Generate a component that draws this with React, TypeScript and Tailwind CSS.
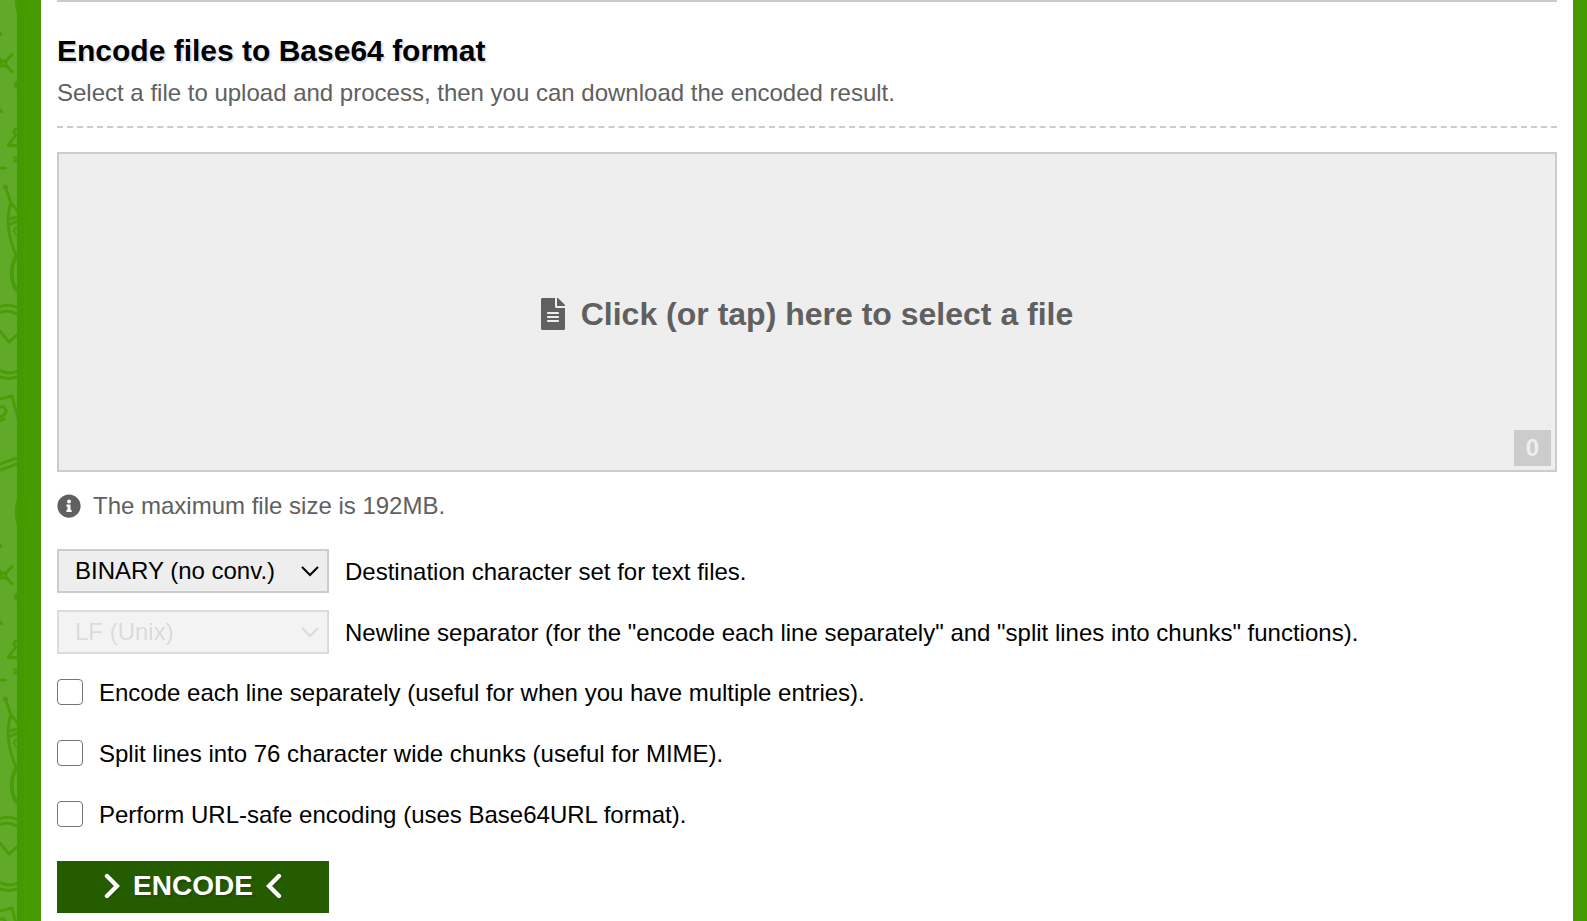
import React from "react";
import { FaFileAlt, FaInfoCircle } from "react-icons/fa";

function PatternStrip() {
  return (
    <div className="relative w-[17px] shrink-0 overflow-hidden bg-[#61a928]" aria-hidden="true">
      <svg className="absolute inset-0 h-full w-full">
        <defs>
          <pattern id="doodles" width="17" height="512" patternUnits="userSpaceOnUse">
            <g fill="none" stroke="#4a9d08" strokeWidth="3" strokeLinecap="round" strokeLinejoin="round">
              <circle cx="53" cy="0" r="38.5" fill="#4a9d08" stroke="none" />
              <circle cx="53" cy="512" r="38.5" fill="#4a9d08" stroke="none" />
              <circle cx="0" cy="34" r="2.2" fill="#4a9d08" stroke="none" />
              <path d="M12 54.500L4 63L12 72M-6 54L4 63L-6 72" />
              <circle cx="3.500" cy="63.500" r="4" fill="#4a9d08" stroke="none" />
              <circle cx="3.500" cy="63.500" r="1" fill="#61a928" stroke="none" />
              <circle cx="18" cy="85" r="4.2" fill="#4a9d08" stroke="none" />
              <path d="M-2 107L1.500 112" />
              <circle cx="17" cy="132" r="3" />
              <path d="M16 135L8 145.500H19" />
              <path d="M14 157L18 162M14 162L18 157" strokeWidth="2.2" />
              <path d="M-2 168H5.500" />
              <circle cx="5.500" cy="187" r="2.600" fill="#4a9d08" stroke="none" />
              <path d="M5.500 187L11 203L18 211M11 203C6 216 7 238 18 259M9 219L17 217M9 225L17 221" />
              <circle cx="18" cy="231" r="4" strokeWidth="2" />
              <path d="M15 258C10 269 11 283 17 291" strokeWidth="4" />
              <path d="M0 306.500Q8 304 17 307M0 312.500Q9 309 17 314M0 331L9 342L17 335" />
              <path d="M0 370.500Q9 375 17 371M0 377Q9 380 17 377" />
              <path d="M0 399L12 396L18 418M0 407C5 406 8 411 4 415C3 416 1 417 0 416M0 421L4 419" />
              <path d="M0 464L17 458M0 470L17 464" />
            </g>
          </pattern>
        </defs>
        <rect width="100%" height="100%" fill="url(#doodles)" />
      </svg>
    </div>
  );
}

function Chevron({ path }: { path: string }) {
  return (
    <svg
      viewBox="0 0 16 26"
      className="h-[26px] w-4 drop-shadow-[1px_1px_1px_#1f4d00]"
      fill="none"
      stroke="currentColor"
      strokeWidth="4.4"
      strokeLinecap="round"
      strokeLinejoin="miter"
      aria-hidden="true"
    >
      <path d={path} />
    </svg>
  );
}

type SelectRowProps = { id: string; options: string[]; label: string; disabled?: boolean };

function SelectRow({ id, options, label, disabled = false }: SelectRowProps) {
  return (
    <div className="flex items-center gap-4">
      <div className={disabled ? "relative w-[272px] shrink-0 opacity-70" : "relative w-[272px] shrink-0"}>
        <select
          id={id}
          disabled={disabled}
          className="block h-11 w-full appearance-none border-2 border-[#ccc] bg-[#eee] pr-10 pl-4 text-black disabled:text-[#ccc]"
        >
          {options.map((option) => (
            <option key={option}>{option}</option>
          ))}
        </select>
        <svg
          viewBox="0 0 18 12"
          className={
            disabled
              ? "pointer-events-none absolute top-4 right-[10px] h-3 w-[18px] text-[#ccc]"
              : "pointer-events-none absolute top-4 right-[10px] h-3 w-[18px] text-black"
          }
          fill="none"
          stroke="currentColor"
          strokeWidth="2"
          aria-hidden="true"
        >
          <path d="M1 2L9 10L17 2" />
        </svg>
      </div>
      <label htmlFor={id} className="pt-0.5">
        {label}
      </label>
    </div>
  );
}

function CheckRow({ id, label }: { id: string; label: string }) {
  return (
    <div className="flex h-[42px] items-center gap-4">
      <input
        id={id}
        type="checkbox"
        className="size-[26px] shrink-0 appearance-none rounded-[4px] border border-[#767676] bg-white checked:bg-[#459a00]"
      />
      <label htmlFor={id} className="pt-0.5">
        {label}
      </label>
    </div>
  );
}

export default function App() {
  return (
    <div className="flex min-h-screen bg-[#459a00] font-['Liberation_Sans',Arial,sans-serif] text-[24px] leading-8 text-black">
      <PatternStrip />
      <main className="mr-[14px] ml-6 min-w-0 flex-1 bg-white px-4">
        <header className="border-t-2 border-[#ccc] pt-[31px]">
          <h1 className="text-[30px] leading-9 font-bold [text-shadow:2px_2px_1px_#dde2ea]">
            Encode files to Base64 format
          </h1>
          <p className="mt-2 text-[#606060]">Select a file to upload and process, then you can download the encoded result.</p>
        </header>
        <hr className="mt-[17px] border-t-2 border-dashed border-[#ccc]" />
        <form className="flex flex-col" onSubmit={(event) => event.preventDefault()}>
          <label className="relative mt-6 flex h-80 cursor-pointer items-center justify-center gap-4 border-2 border-[#ccc] bg-[#eee] pt-1 text-[32px] font-bold text-[#606060]">
            <input type="file" className="sr-only" />
            <FaFileAlt className="h-8 w-6" aria-hidden="true" />
            <span>Click (or tap) here to select a file</span>
            <span className="absolute right-1 bottom-1 flex h-9 w-[37px] items-center justify-center bg-[#ccc] text-[24px] text-[#eee]">
              0
            </span>
          </label>
          <p className="mt-[18px] flex items-center gap-3 text-[#606060]">
            <FaInfoCircle className="size-6" aria-hidden="true" />
            The maximum file size is 192MB.
          </p>
          <div className="mt-[27px] flex flex-col gap-[17px]">
            <SelectRow
              id="charset"
              options={["BINARY (no conv.)", "UTF-8", "ASCII"]}
              label="Destination character set for text files."
            />
            <SelectRow
              id="newline"
              options={["LF (Unix)", "CRLF (Windows)"]}
              label={'Newline separator (for the "encode each line separately" and "split lines into chunks" functions).'}
              disabled
            />
          </div>
          <div className="mt-[17px] flex flex-col gap-[19px]">
            <CheckRow id="each-line" label="Encode each line separately (useful for when you have multiple entries)." />
            <CheckRow id="chunks" label="Split lines into 76 character wide chunks (useful for MIME)." />
            <CheckRow id="url-safe" label="Perform URL-safe encoding (uses Base64URL format)." />
          </div>
          <button
            type="submit"
            className="mt-[26px] flex h-[52px] w-[272px] items-center justify-center gap-[13px] bg-[#265c00] pb-0.5 text-[28px] font-bold text-white [text-shadow:2px_2px_2px_#1f4d00]"
          >
            <Chevron path="M3 3L13 13L3 23" />
            ENCODE
            <Chevron path="M13 3L3 13L13 23" />
          </button>
        </form>
      </main>
    </div>
  );
}
